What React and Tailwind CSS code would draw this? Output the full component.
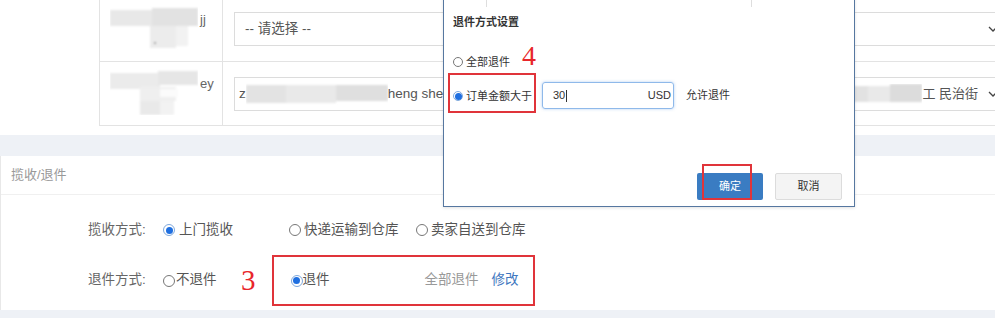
import React from "react";

const font = "font-['Liberation_Sans','Noto_Sans_CJK_SC',sans-serif]";

function Radio({ on, size = "w-[12px] h-[12px]", dot = "w-[7px] h-[7px]" }) {
  return on ? (
    <span className={`${size} shrink-0 rounded-full border border-[#7fa9dd] bg-white flex items-center justify-center`}>
      <span className={`${dot} rounded-full bg-[#1f6fe0]`} />
    </span>
  ) : (
    <span className={`${size} shrink-0 rounded-full border border-[#777] bg-white`} />
  );
}

function Mosaic({ w, h, cells }) {
  return (
    <svg width={w} height={h} viewBox={`0 0 ${w} ${h}`} className="shrink-0">
      <defs>
        <filter id="soft">
          <feGaussianBlur stdDeviation="1.2" />
        </filter>
      </defs>
      <g filter="url(#soft)">
        {cells.map((c, i) => (
          <rect key={i} x={c[0]} y={c[1]} width={c[2]} height={c[3]} fill={c[4]} />
        ))}
      </g>
    </svg>
  );
}

function Chevron() {
  return (
    <svg width="10" height="6" viewBox="0 0 10 6" className="shrink-0">
      <polyline points="1,1 5,5 9,1" fill="none" stroke="#444" strokeWidth="1.3" />
    </svg>
  );
}

export default function App() {
  return (
    <div className={`relative w-[995px] h-[318px] overflow-hidden bg-[#eef1f6] text-[#555] ${font}`}>
      {/* upper form panel */}
      <div className="bg-white h-[135px] pl-[99px] pb-[9px]">
        <div className="w-[920px] border-l border-[#e3e3e3]">
          <div className="flex h-[62px] border-b border-[#e3e3e3]">
            <div className="w-[123px] shrink-0 border-r border-[#e3e3e3] flex items-start pl-[10px] pt-[4px]">
              <Mosaic
                w={88}
                h={48}
                cells={[
                  [0, 6, 42, 16, "#e8e8e8"],
                  [42, 4, 46, 18, "#e2e2e2"],
                  [40, 22, 26, 22, "#ececec"],
                  [66, 22, 12, 20, "#f2f2f2"],
                  [44, 38, 2, 2, "#999"],
                ]}
              />
              <span className="text-[13px] text-[#666] leading-none mt-[9px] ml-[2px]">jj</span>
            </div>
            <div className="pl-[11px] pt-[12px]">
              <div className="w-[775px] h-[34px] border border-[#dcdcdc] flex items-center justify-between px-[10px] text-[13.5px] text-[#555]">
                <span>-- 请选择 --</span>
                <Chevron />
              </div>
            </div>
          </div>
          <div className="flex h-[64px] border-b border-[#e3e3e3]">
            <div className="w-[123px] shrink-0 border-r border-[#e3e3e3] flex items-start pl-[10px] pt-[5px]">
              <Mosaic
                w={88}
                h={48}
                cells={[
                  [0, 6, 50, 16, "#ebebeb"],
                  [48, 4, 40, 14, "#e6e6e6"],
                  [30, 20, 36, 14, "#efefef"],
                  [50, 22, 18, 8, "#fbfbfb"],
                  [30, 34, 20, 14, "#e9e9e9"],
                  [50, 34, 14, 14, "#f2f2f2"],
                ]}
              />
              <span className="text-[13px] text-[#666] leading-none mt-[10px] ml-[2px]">ey</span>
            </div>
            <div className="pl-[11px] pt-[15px]">
              <div className="w-[775px] h-[34px] border border-[#dcdcdc] flex items-center justify-between pl-[4px] pr-[10px] text-[13.5px] text-[#555]">
                <div className="flex items-center">
                  <span>z</span>
                  <Mosaic
                    w={142}
                    h={22}
                    cells={[
                      [0, 2, 40, 18, "#e3e3e3"],
                      [40, 2, 50, 18, "#e9e9e9"],
                      [90, 2, 52, 16, "#dfdfdf"],
                    ]}
                  />
                  <span className="whitespace-nowrap">heng she</span>
                </div>
                <div className="flex items-center gap-[10px]">
                  <div className="flex items-center">
                    <Mosaic
                      w={84}
                      h={20}
                      cells={[
                        [0, 2, 30, 16, "#e2e2e2"],
                        [30, 2, 22, 16, "#e9e9e9"],
                        [52, 0, 32, 18, "#dcdcdc"],
                      ]}
                    />
                    <span className="whitespace-nowrap text-[13px]">工 民治街</span>
                  </div>
                  <Chevron />
                </div>
              </div>
            </div>
          </div>
        </div>
      </div>

      {/* spacer band */}
      <div className="h-[21px]" />

      {/* pickup / return panel */}
      <div className="bg-white border-l border-[#e8e8e8] h-[154px]">
        <div className="h-[39px] border-b border-[#f0f0f0] flex items-center pl-[10px] text-[13px] text-[#999]">
          揽收/退件
        </div>
        <div className="pl-[87px] flex flex-col text-[13.5px]">
          <div className="flex items-center h-[30px] mt-[20px]">
            <span className="w-[75px] shrink-0 text-[#666]">揽收方式:</span>
            <label className="w-[126px] flex items-center gap-[4px]">
              <Radio on />
              <span>上门揽收</span>
            </label>
            <label className="w-[127px] flex items-center gap-[3px]">
              <Radio />
              <span>快递运输到仓库</span>
            </label>
            <label className="flex items-center gap-[3px]">
              <Radio />
              <span>卖家自送到仓库</span>
            </label>
          </div>
          <div className="flex items-center h-[51px] mt-[10px]">
            <span className="w-[75px] shrink-0 text-[#666]">退件方式:</span>
            <label className="w-[78px] flex items-center gap-[1px]">
              <Radio />
              <span>不退件</span>
            </label>
            <span className="font-['Liberation_Serif',serif] text-[29px] leading-none text-[#e8262b]">3</span>
            <div className="ml-[16px] w-[263px] h-[51px] border-2 border-[#e0343a] flex items-center pl-[17px] pr-[14px]">
              <label className="flex items-center">
                <Radio on />
                <span>退件</span>
              </label>
              <span className="ml-auto text-[#999]">全部退件</span>
              <span className="ml-[13px] text-[#3f78c0]">修改</span>
            </div>
          </div>
        </div>
      </div>

      {/* return settings dialog */}
      <div className="absolute left-[443px] top-[-30px] w-[412px] h-[237px] border border-[#5677a0] bg-white shadow-[0_1px_3px_rgba(0,0,0,0.12)] flex flex-col text-[11px] text-[#333]">
        <div className="h-[36px] flex shrink-0">
          <div className="w-[43px] border-r border-[#dedede]" />
          <div className="w-[265px] border-r border-[#dedede]" />
        </div>
        <div className="pl-[9px] flex flex-col">
          <div className="pt-[9px] h-[21px] font-bold leading-[12px]">退件方式设置</div>
          <div className="flex items-center h-[20px] mt-[24px]">
            <label className="flex items-center gap-[3px]">
              <Radio size="w-[10px] h-[10px]" dot="w-[7px] h-[7px]" />
              <span>全部退件</span>
            </label>
            <span className="self-start mt-[-10px] ml-[12px] font-['Liberation_Serif',serif] text-[28px] leading-none text-[#e8262b]">4</span>
          </div>
          <div className="flex items-start h-[40px] mt-[1px]">
            <div className="ml-[-5px] w-[88px] h-[40px] border-2 border-[#e0343a] flex items-center pl-[3px] pt-[6px]">
              <label className="flex items-center gap-[3px]">
                <Radio on size="w-[10px] h-[10px]" dot="w-[7px] h-[7px]" />
                <span className="whitespace-nowrap">订单金额大于</span>
              </label>
            </div>
            <div className="ml-[6px] mt-[9px] w-[132px] h-[27px] rounded-[3px] border border-[#8fb9ea] shadow-[0_0_3px_rgba(102,160,230,0.5)] flex items-center justify-between pl-[10px] pr-[2px]">
              <span className="flex items-center">
                30<span className="w-px h-[12px] bg-[#333] ml-[1px]" />
              </span>
              <span>USD</span>
            </div>
            <span className="ml-[12px] mt-[9px] leading-[27px]">允许退件</span>
          </div>
        </div>
        <div className="mt-[60px] pr-[12px] flex justify-end gap-[12px]">
          <div className="relative w-[66px] h-[27px] rounded-[2px] bg-[#3a7cc2] text-white flex items-center justify-center">
            确定
            <span className="absolute left-[5px] top-[-9px] w-[50px] h-[36px] border-2 border-[#e0343a]" />
          </div>
          <div className="w-[67px] h-[27px] rounded-[2px] border border-[#dcdcdc] bg-[#f4f4f4] flex items-center justify-center">
            取消
          </div>
        </div>
      </div>
    </div>
  );
}
